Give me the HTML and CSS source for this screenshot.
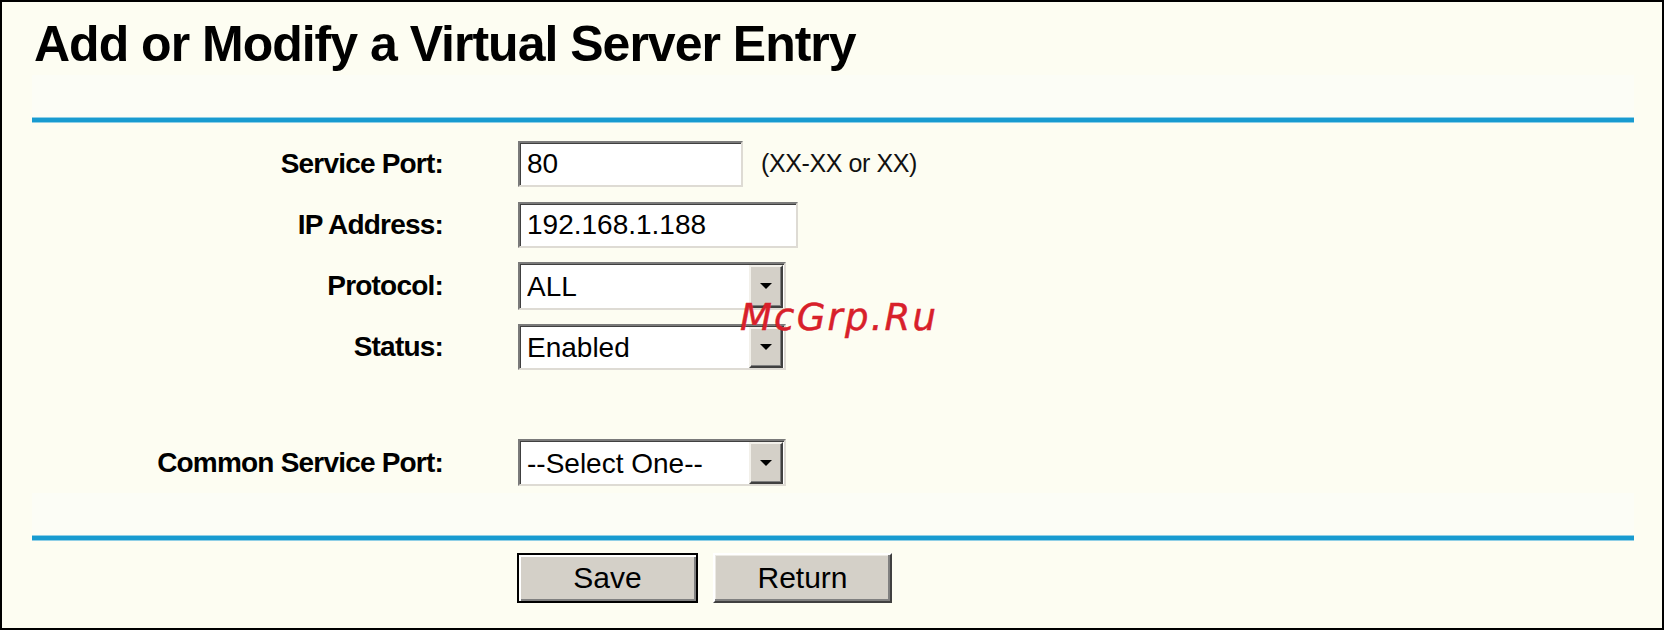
FILE: index.html
```html
<!DOCTYPE html>
<html lang="en">

<head>
    <meta charset="UTF-8">
    <meta name="viewport" content="width=device-width, initial-scale=1.0">
    <title>Virtual Server</title>
    <link rel="stylesheet" href="styles.css">
</head>

<body>
    <div class="page">
        <h1 class="title">Add or Modify a Virtual Server Entry</h1>
        <div class="band"></div>
        <div class="rule"></div>

        <form class="form">
            <label class="label" for="port">Service Port:</label>
            <div class="field">
                <input class="text port" id="port" type="text" value="80">
                <span class="hint">(XX-XX or XX)</span>
            </div>

            <label class="label" for="ip">IP Address:</label>
            <div class="field">
                <input class="text ip" id="ip" type="text" value="192.168.1.188">
            </div>

            <label class="label" for="protocol">Protocol:</label>
            <div class="field">
                <span class="select">
                    <select id="protocol">
                        <option>ALL</option>
                        <option>TCP</option>
                        <option>UDP</option>
                    </select>
                    <span class="arrow"></span>
                </span>
            </div>

            <label class="label" for="status">Status:</label>
            <div class="field">
                <span class="select short">
                    <select id="status">
                        <option>Enabled</option>
                        <option>Disabled</option>
                    </select>
                    <span class="arrow"></span>
                </span>
            </div>

            <div class="spacer"></div>

            <label class="label" for="common">Common Service Port:</label>
            <div class="field">
                <span class="select common">
                    <select id="common">
                        <option>--Select One--</option>
                        <option>HTTP</option>
                        <option>FTP</option>
                    </select>
                    <span class="arrow"></span>
                </span>
            </div>
        </form>

        <div class="band low"></div>
        <div class="rule"></div>

        <div class="actions">
            <button class="btn btn-default" type="button">Save</button>
            <button class="btn" type="button">Return</button>
        </div>

        <div class="watermark">McGrp.Ru</div>
    </div>
</body>

</html>
```

FILE: styles.css
```css
body {
    margin: 0;
    font-family: "Liberation Sans", Arial, sans-serif;
    color: #000;
}
.page {
    position: relative;
    box-sizing: border-box;
    width: 1664px;
    height: 630px;
    border: 2px solid #000;
    background: #fdfdf2;
}
.title {
    margin: 17px 0 0;
    padding-left: 32px;
    font-size: 50px;
    line-height: 50px;
    font-weight: bold;
    letter-spacing: -1px;
}
.band {
    height: 43px;
    margin: 6px 28px 0 30px;
    background: #fcfdf6;
}
.band.low {
    margin-top: 0;
}
.rule {
    height: 4px;
    margin: 0 28px 0 30px;
    background: #189bd0;
    box-shadow: 0 1px 0 #8fcfe6, 0 -1px 0 #8fcfe6;
}
.form {
    display: grid;
    grid-template-columns: 411px 1fr;
    grid-template-rows: repeat(4, 61px) 55px 61px;
    column-gap: 75px;
    padding: 11px 0 0 30px;
}
.label {
    display: flex;
    align-items: center;
    justify-content: flex-end;
    font-size: 28px;
    font-weight: bold;
    letter-spacing: -0.8px;
}
.field {
    display: flex;
    align-items: center;
    gap: 18px;
}
.spacer {
    grid-column: 1 / 3;
}
.text {
    box-sizing: border-box;
    height: 46px;
    padding: 0 0 0 7px;
    border: 2px solid;
    border-color: #7a7a7a #dedbd4 #dedbd4 #7a7a7a;
    box-shadow: inset 1px 1px 0 #404040;
    background: #fff;
    font-family: "Liberation Sans", Arial, sans-serif;
    font-size: 28px;
    color: #000;
    outline: none;
}
.port {
    width: 225px;
}
.ip {
    width: 280px;
}
.hint {
    font-size: 25px;
    letter-spacing: -0.4px;
    color: #111;
}
.select {
    box-sizing: border-box;
    display: flex;
    width: 268px;
    height: 48px;
    border: 2px solid;
    border-color: #7a7a7a #dedbd4 #dedbd4 #7a7a7a;
    box-shadow: inset 1px 1px 0 #404040;
    background: #fff;
    padding: 1px 1px 0 1px;
}
.select.short {
    height: 46px;
}
.select.common {
    height: 47px;
}
.select select {
    flex: 1;
    min-width: 0;
    appearance: none;
    border: none;
    background: transparent;
    padding: 0 0 0 6px;
    font-family: "Liberation Sans", Arial, sans-serif;
    font-size: 28px;
    color: #000;
    outline: none;
}
.arrow {
    box-sizing: border-box;
    display: flex;
    align-items: center;
    justify-content: center;
    width: 34px;
    border: 2px solid;
    border-color: #f2f0ea #404040 #404040 #f2f0ea;
    box-shadow: inset -1px -1px 0 #808080;
    background: #d4d0c8;
}
.arrow::after {
    content: "";
    border-left: 6px solid transparent;
    border-right: 6px solid transparent;
    border-top: 6px solid #000;
}
.actions {
    display: flex;
    gap: 15px;
    padding: 13px 0 0 515px;
}
.btn {
    box-sizing: border-box;
    width: 179px;
    height: 50px;
    border: 2px solid;
    border-color: #fff #404040 #404040 #fff;
    box-shadow: inset -2px -2px 0 #808080, inset 1px 1px 0 #ebe9e3;
    background: #d4d0c8;
    font-family: "Liberation Sans", Arial, sans-serif;
    font-size: 30px;
    color: #000;
    padding: 0;
}
.btn-default {
    width: 181px;
    border-color: #000;
    box-shadow: inset 2px 2px 0 #fff, inset -2px -2px 0 #808080;
}
.watermark {
    position: absolute;
    left: 738px;
    top: 297px;
    font-family: "DejaVu Sans", sans-serif;
    font-style: italic;
    font-size: 37px;
    line-height: 37px;
    letter-spacing: 2.2px;
    color: #d8202a;
    -webkit-text-stroke: 0.5px #d8202a;
}
```
